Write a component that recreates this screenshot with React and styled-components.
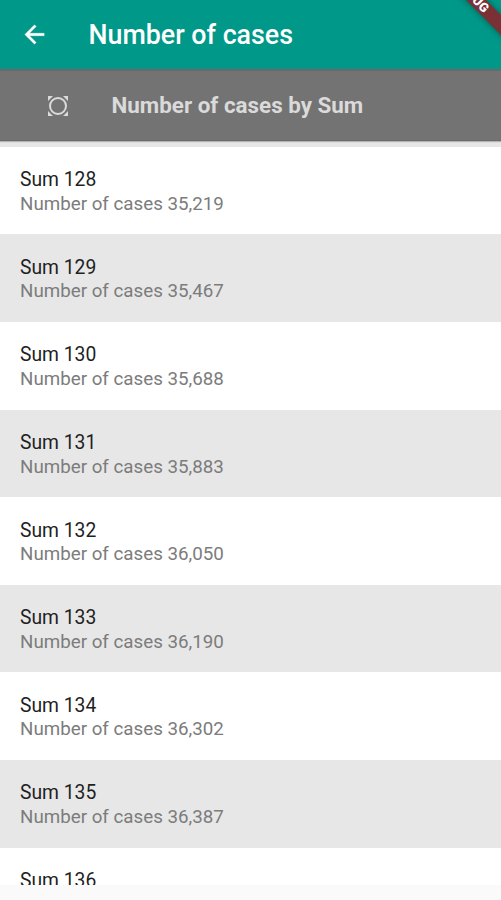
import React from "react";
import styled, { createGlobalStyle } from "styled-components";

const GlobalStyle = createGlobalStyle`
  * {
    box-sizing: border-box;
  }

  body {
    margin: 0;
    font-family: Roboto, "Liberation Sans", sans-serif;
    background: #fafafa;
  }
`;

const Screen = styled.div`
  position: relative;
  display: flex;
  flex-direction: column;
  height: 900px;
  overflow: hidden;
  padding-bottom: 15px;
`;

const AppBar = styled.header`
  display: flex;
  align-items: center;
  flex: none;
  height: 69px;
  padding-left: 20px;
  background: #009888;
  color: #fff;
`;

const BackIcon = styled.svg`
  width: 29px;
  height: 29px;
  margin-right: 39.5px;
  stroke: currentColor;
  stroke-width: 0.3;
`;

const Title = styled.h1`
  margin: 0;
  font-size: 26.8px;
  font-weight: 500;
  white-space: nowrap;
`;

const SubBar = styled.div`
  display: flex;
  align-items: center;
  flex: none;
  height: 72px;
  padding-left: 48px;
  background: #737373;
  border-top: 2px solid #6a6869;
  border-bottom: 1px solid #6c6c6c;
  box-shadow: 0 1px 1px #b4b4b4;
  color: #dadada;
  z-index: 1;
`;

const SumIcon = styled.svg`
  width: 20px;
  height: 20px;
  margin-right: 43.5px;
`;

const SubTitle = styled.h2`
  margin: 0;
  padding-bottom: 2px;
  font-size: 22.4px;
  font-weight: 700;
  white-space: nowrap;
`;

const List = styled.div`
  flex: 1;
  min-height: 0;
  overflow: hidden;
  padding-top: 5.6px;
  background: #e7e7e7;
`;

const Row = styled.div`
  display: flex;
  flex-direction: column;
  height: 87.65px;
  padding: 21.4px 20px 0;
  background: ${props => (props.$shaded ? "#e7e7e7" : "#fff")};
`;

const Name = styled.span`
  font-size: 19.3px;
  line-height: 23.6px;
  color: #1f1f1f;
`;

const Count = styled.span`
  font-size: 18.75px;
  line-height: 24px;
  color: #7c7c7c;
`;

const Ribbon = styled.div`
  position: absolute;
  top: -11px;
  left: 412px;
  width: 120px;
  height: 14px;
  transform: rotate(45deg);
  background: #793135;
  box-shadow: 0 0 6px rgba(0, 0, 0, 0.4);
  color: #fff;
  font-size: 12.8px;
  font-weight: 900;
  line-height: 14px;
  text-align: center;
  z-index: 2;
`;

const cases = [
  { sum: 128, count: "35,219" },
  { sum: 129, count: "35,467" },
  { sum: 130, count: "35,688" },
  { sum: 131, count: "35,883" },
  { sum: 132, count: "36,050" },
  { sum: 133, count: "36,190" },
  { sum: 134, count: "36,302" },
  { sum: 135, count: "36,387" },
  { sum: 136 }
];

export default function App() {
  return (
    <Screen>
      <GlobalStyle />
      <AppBar>
        <BackIcon viewBox="0 0 24 24" fill="currentColor">
          <path d="M20 11H7.83l5.59-5.59L12 4l-8 8 8 8 1.41-1.41L7.83 13H20v-2z" />
        </BackIcon>
        <Title>Number of cases</Title>
      </AppBar>
      <SubBar>
        <SumIcon viewBox="0 0 20 20" fill="currentColor">
          <circle cx="10" cy="10" r="8" fill="none" stroke="currentColor" strokeWidth="2" />
          <path d="M0 0h5L0 5zM20 0v5l-5-5zM0 20v-5l5 5zM20 20h-5l5-5z" />
        </SumIcon>
        <SubTitle>Number of cases by Sum</SubTitle>
      </SubBar>
      <List>
        {cases.map((item, index) => (
          <Row key={item.sum} $shaded={index % 2 === 1}>
            <Name>Sum {item.sum}</Name>
            {item.count && <Count>Number of cases {item.count}</Count>}
          </Row>
        ))}
      </List>
      <Ribbon>DEBUG</Ribbon>
    </Screen>
  );
}
